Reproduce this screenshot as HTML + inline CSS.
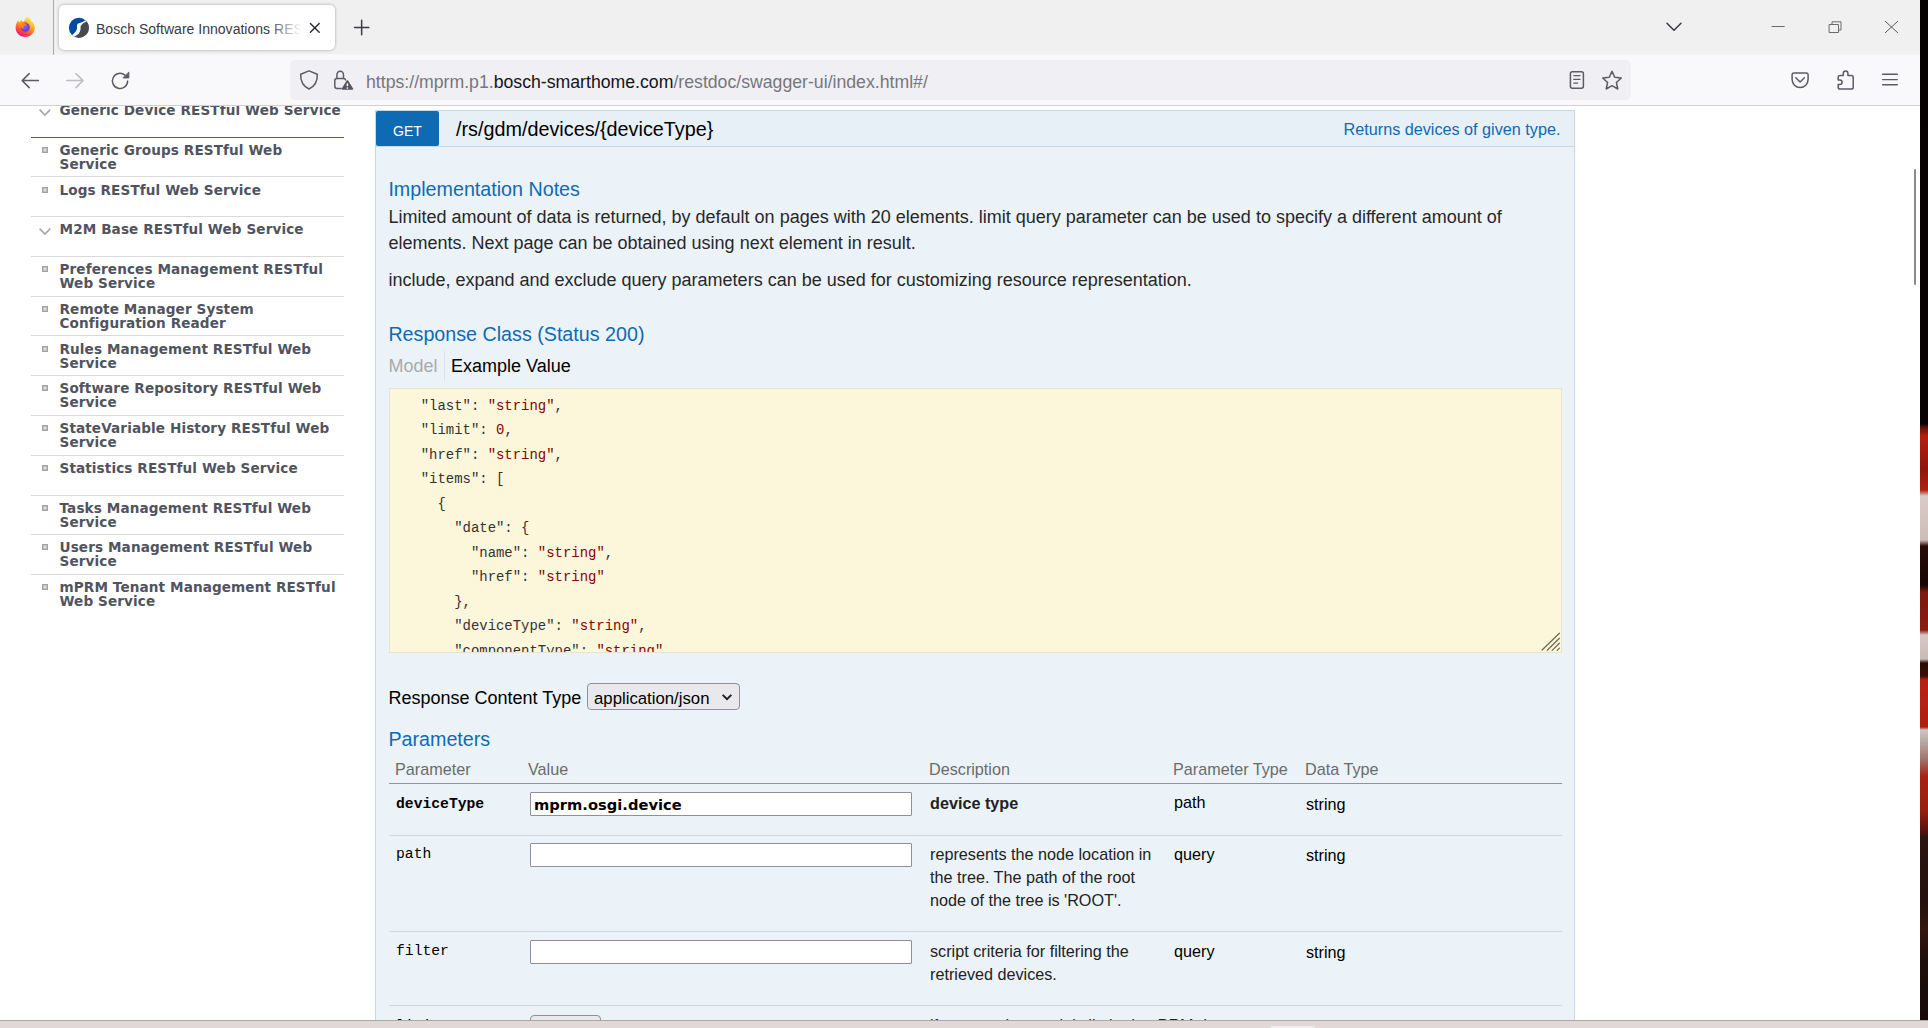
<!DOCTYPE html>
<html lang="en">
<head>
<meta charset="utf-8">
<title>Bosch Software Innovations REST API</title>
<style>
*{box-sizing:border-box;}
html,body{margin:0;padding:0;}
body{width:1928px;height:1028px;overflow:hidden;position:relative;background:#fff;font-family:"Liberation Sans",sans-serif;color:#000;}
.abs{position:absolute;}
#browser{position:absolute;left:0;top:0;width:1920px;height:1020px;overflow:hidden;background:#fff;}
/* ---------- chrome ---------- */
#tabbar{position:absolute;left:0;top:0;width:1920px;height:55px;background:linear-gradient(to bottom,#f0f0f1 0,#f0f0f1 54px,#f5f5f7 54px,#f5f5f7 55px);}
#tabsep{position:absolute;left:53px;top:0;width:1px;height:55px;background:#a9a9ab;}
#tab{position:absolute;left:59px;top:5px;width:276px;height:45px;background:#fff;border-radius:5px;box-shadow:0 0 3px rgba(0,0,0,.35);}
#tabtitle{position:absolute;left:37px;top:0;height:45px;line-height:48px;font-size:14.05px;color:#3b3a44;white-space:nowrap;width:208px;overflow:hidden;}
#tabfade{position:absolute;left:209px;top:4px;width:38px;height:36px;background:linear-gradient(to right,rgba(255,255,255,0),#fff 88%);}
#navbar{position:absolute;left:0;top:55px;width:1920px;height:51px;background:#f9f9fb;border-bottom:1px solid #cfcfd4;}
#urlbar{position:absolute;left:289.5px;top:60px;width:1341.5px;height:40px;background:#f0f0f4;border-radius:5px;}
#urltext{position:absolute;left:366px;top:61px;height:40px;line-height:42px;font-size:17.68px;letter-spacing:0;color:#77767e;white-space:nowrap;}
#urltext b{font-weight:normal;color:#15141a;}
svg{position:absolute;overflow:visible;}
/* ---------- page ---------- */
#page{position:absolute;left:0;top:106px;width:1920px;height:914px;overflow:hidden;background:#fff;}
#side{position:absolute;left:31px;top:-9px;width:313px;font-family:"DejaVu Sans","Liberation Sans",sans-serif;font-weight:bold;font-size:13.6px;letter-spacing:0.1px;line-height:14px;color:#50545f;}
.si{position:relative;height:40px;border-bottom:1px solid #d9d9d9;padding:5px 0 0 28.5px;}
.si.first{height:41px;padding-top:6px;border-bottom:1.5px solid #1c6a8c;}
.si.last{border-bottom:none;}
.bul{position:absolute;left:11px;top:9px;width:6px;height:6px;border:1px solid #a3a3a3;background:#dcdcdc;box-shadow:inset 0 0 0 0.5px #a9a9a9;}
#panel{position:absolute;left:375px;top:4px;width:1200px;height:940px;background:#ebf3f9;border:1px solid #c3d9ec;}
#heading{position:absolute;left:0;top:0;width:1198px;height:36px;background:#e7f0f7;border-bottom:1px solid #c3d9ec;}
#get{position:absolute;left:0px;top:0px;width:63px;height:35px;background:#0f6ab4;border-radius:2px;color:#fff;font-size:14px;text-align:center;line-height:41px;}
#pathtxt{position:absolute;left:80px;top:0;line-height:37px;font-size:19.8px;color:#000;white-space:nowrap;}
#rettxt{position:absolute;right:13.6px;top:0;line-height:36px;font-size:16.2px;color:#0f6ab4;white-space:nowrap;}
h4{position:absolute;margin:0;font-weight:normal;font-size:19.7px;color:#0f6ab4;white-space:nowrap;line-height:24px;}
.p{position:absolute;left:12.4px;font-size:18px;line-height:26px;color:#282828;white-space:nowrap;}
#snip{position:absolute;left:13px;top:277px;width:1173px;height:265px;background:#fcf6db;border:1px solid #e8e3cb;overflow:hidden;}
#snip pre{margin:0;position:absolute;left:14px;top:4.5px;font-family:"Liberation Mono","DejaVu Sans Mono",monospace;font-size:13.95px;line-height:24.5px;color:#333;}
#snip pre i{font-style:normal;color:#880000;}
.th{position:absolute;top:648px;font-size:16.2px;line-height:20px;color:#6b6b6b;white-space:nowrap;}
.hr{position:absolute;left:13px;width:1173px;height:1px;background:#cfd6dc;}
.pn{position:absolute;left:20px;font-family:"Liberation Mono","DejaVu Sans Mono",monospace;font-size:14.7px;line-height:20px;color:#000;white-space:nowrap;}
.inp{position:absolute;left:154px;width:382px;height:24px;background:#fff;border:1px solid #8f8f9d;border-radius:1px;}
.td{position:absolute;font-size:16.2px;line-height:23px;color:#222;white-space:nowrap;}
</style>
</head>
<body>
<div id="browser">
  <div id="tabbar"></div>
  <div id="tabsep"></div>
  <div id="tab">
    <div id="tabtitle">Bosch Software Innovations REST API</div>
    <div id="tabfade"></div>
  </div>
  <div id="navbar"></div>
  <div id="urlbar"></div>
  <div id="urltext">https://mprm.p1.<b>bosch-smarthome.com</b>/restdoc/swagger-ui/index.html#/</div>


  <svg id="chromeicons" width="1920" height="106" viewBox="0 0 1920 106" style="left:0;top:0;" fill="none" stroke="#5b5b66" stroke-width="1.5" stroke-linecap="round" stroke-linejoin="round">
    <defs>
      <radialGradient id="ffg" cx="0.55" cy="0.2" r="0.95">
        <stop offset="0" stop-color="#fff36b"/><stop offset="0.35" stop-color="#ffbd2e"/><stop offset="0.7" stop-color="#ff6a2a"/><stop offset="1" stop-color="#e31587"/>
      </radialGradient>
      <linearGradient id="ffg2" x1="0.8" y1="0.05" x2="0.35" y2="1">
        <stop offset="0" stop-color="#fff14f"/><stop offset="0.3" stop-color="#ffbd2a"/><stop offset="0.55" stop-color="#ff8a1a"/><stop offset="0.8" stop-color="#ff3b43"/><stop offset="1" stop-color="#f0158a"/>
      </linearGradient>
      <clipPath id="favclip"><circle cx="78.9" cy="27.7" r="10"/></clipPath>
      <radialGradient id="ffp" cx="0.5" cy="0.5" r="0.6">
        <stop offset="0" stop-color="#9059ff"/><stop offset="1" stop-color="#5b2ec9"/>
      </radialGradient>
    </defs>
    <!-- firefox logo -->
    <g stroke="none">
      <path d="M27.2 16.6 C29.5 18 30.6 19.6 31 21 C33.4 22.6 34.9 25.2 34.8 28 C34.7 33 30.4 36.9 25.2 36.9 C19.9 36.9 15.6 32.8 15.6 27.7 C15.6 24.6 16.8 22 18.4 20.3 C18.5 21.3 18.9 22 19.4 22.5 C19.8 21.3 20.6 20.4 21.6 19.8 C21.7 20.8 22.2 21.7 23.2 22.1 C24.1 20.6 25.4 19.8 25.6 18.6 C26.3 18.3 27 17.6 27.2 16.6 Z" fill="url(#ffg2)"/>
      <circle cx="25.4" cy="27.4" r="4.3" fill="url(#ffp)"/>
      <path d="M22.6 21.8 C24.4 21.3 27 22 28.4 23.6 C27.2 23.2 25.8 23.4 25 24 C26.3 24.2 27.3 25 27.6 26 C26.4 25.2 25 25.3 24.2 26 C23.2 26.9 23.2 28.3 24 29.2 C22.3 29 21 27.6 21 26 C20.9 24.3 21.6 22.6 22.6 21.8 Z" fill="#ff8a16"/>
      <path d="M24.4 22.3 C25.8 22.1 27.4 22.7 28.4 23.6 C27.2 23.2 25.9 23.4 25 24 C24.6 23.5 24.4 22.9 24.4 22.3 Z" fill="#c13ae0" opacity="0.85"/>
    </g>
    <!-- tab favicon -->
    <g stroke="none" clip-path="url(#favclip)">
      <rect x="68" y="17" width="22" height="22" fill="#004a9f"/>
      <path d="M87.5 19.5 L82.7 23.6 L80.6 26.2 L80.6 28.7 L80.1 31.3 L78.5 33.9 L73.5 37.5 L90 40 L92 18 Z" fill="#4a4a4a"/>
      <path d="M86.5 19.8 L82.5 22 L77.6 23.8 L77 25.2 L77 28.7 L75.9 31.3 L73.4 33.9 L70.5 36.2 L73.6 37.2 L78.5 33.9 L80.1 31.3 L80.6 28.7 L80.6 26.2 L82.7 23.6 L88 20.6 Z" fill="#fff"/>
    </g>
    <!-- tab close -->
    <path d="M310.4 23.4 L319.2 32.2 M319.2 23.4 L310.4 32.2" stroke="#2b2a33" stroke-width="1.4"/>
    <!-- new tab -->
    <path d="M354.5 27.5 H368.8 M361.65 20.3 V34.7" stroke="#3a3944" stroke-width="1.5"/>
    <!-- list all tabs -->
    <path d="M1667 23.2 L1674 30.2 L1681 23.2" stroke="#3a3944" stroke-width="1.5"/>
    <!-- window controls -->
    <path d="M1772 26.5 H1784.3" stroke="#6a6a6a" stroke-width="1"/>
    <path d="M1829.5 24.5 H1838.5 V32.5 H1829.5 Z M1832 24.5 V21.8 H1841 V30 H1838.5" stroke="#6a6a6a" stroke-width="1" stroke-linejoin="miter"/>
    <path d="M1885.3 21.3 L1897.7 32.7 M1897.7 21.3 L1885.3 32.7" stroke="#5a5a5a" stroke-width="1"/>
    <!-- back -->
    <path d="M22.2 80.6 H38.4 M29.2 73.6 L22.2 80.6 L29.2 87.6"/>
    <!-- forward (disabled) -->
    <path d="M66.8 80.6 H83 M76 73.6 L83 80.6 L76 87.6" stroke="#bdbdc2"/>
    <!-- reload -->
    <path d="M127.6 80.9 A7.6 7.6 0 1 1 124.9 75.1" />
    <path d="M128.9 72.3 V78 H123.2 Z" fill="#5b5b66" stroke-width="0.8"/>
    <!-- shield -->
    <path d="M309 70.9 L317.3 74.3 C317.6 80.5 315.3 86 309 89 C302.7 86 300.4 80.5 300.7 74.3 Z"/>
    <!-- lock + warning -->
    <path d="M341 88.4 H337 Q334.8 88.4 334.8 86.2 V80.6 Q334.8 78.6 337 78.6 H343.4 Q345.4 78.6 345.6 80"/>
    <path d="M336.9 78.4 V75 A3.3 3.8 0 0 1 343.5 75 V78.4"/>
    <path d="M347.4 81 L352.4 89 H342.4 Z" fill="#55555f" stroke="#55555f" stroke-width="1.6"/>
    <path d="M347.4 83.3 V86.2" stroke="#fff" stroke-width="1.5" stroke-linecap="butt"/>
    <circle cx="347.4" cy="88" r="0.85" fill="#fff" stroke="none"/>
    <!-- reader view -->
    <rect x="1570.4" y="71.8" width="13" height="16.4" rx="2"/>
    <path d="M1573.8 75.6 H1580 M1573.8 79.4 H1580 M1573.8 83.1 H1577.6" stroke-width="1.3"/>
    <!-- star -->
    <path d="M1612 71.2 L1614.7 77.3 L1621.3 78 L1616.4 82.5 L1617.8 89 L1612 85.7 L1606.2 89 L1607.6 82.5 L1602.7 78 L1609.3 77.3 Z"/>
    <!-- pocket -->
    <path d="M1794 73.1 H1806.2 Q1808.1 73.1 1808.1 75 V79.5 A8 8 0 0 1 1792.1 79.5 V75 Q1792.1 73.1 1794 73.1 Z"/>
    <path d="M1795.8 77.8 L1800.1 82 L1804.4 77.8"/>
    <!-- extensions -->
    <path d="M1843.3 75.4 V73.2 A2.3 2.3 0 0 1 1847.9 73.2 V75.4 H1851.3 Q1853.2 75.4 1853.2 77.3 V87.2 Q1853.2 89.1 1851.3 89.1 H1840.1 Q1838.2 89.1 1838.2 87.2 V84.6 H1839.8 A2.3 2.3 0 0 0 1839.8 80 H1838.2 V77.3 Q1838.2 75.4 1840.1 75.4 Z"/>
    <!-- menu -->
    <path d="M1882.6 74.3 H1897.3 M1882.6 79.6 H1897.3 M1882.6 84.8 H1897.3" stroke-width="1.4"/>
  </svg>

  <div id="page">
    <div id="side">
      <div class="si first"><svg width="12" height="7" viewBox="0 0 12 7" style="left:8px;top:12px;" fill="none" stroke="#a8a8a8" stroke-width="1.7"><path d="M0.6 0.7 L5.9 6 L11.2 0.7"/></svg>Generic Device RESTful Web Service</div>
      <div class="si" style="height:39px"><span class="bul"></span>Generic Groups RESTful Web<br>Service</div>
      <div class="si" style="height:40px;padding-top:6px"><span class="bul" style="top:10px"></span>Logs RESTful Web Service</div>
      <div class="si" style="height:40px"><svg width="12" height="7" viewBox="0 0 12 7" style="left:8px;top:11px;" fill="none" stroke="#a8a8a8" stroke-width="1.7"><path d="M0.6 0.7 L5.9 6 L11.2 0.7"/></svg>M2M Base RESTful Web Service</div>
      <div class="si" style="height:40px"><span class="bul"></span>Preferences Management RESTful<br>Web Service</div>
      <div class="si" style="height:39px"><span class="bul"></span>Remote Manager System<br>Configuration Reader</div>
      <div class="si" style="height:40px;padding-top:6px"><span class="bul" style="top:10px"></span>Rules Management RESTful Web<br>Service</div>
      <div class="si" style="height:40px"><span class="bul"></span>Software Repository RESTful Web<br>Service</div>
      <div class="si" style="height:40px"><span class="bul"></span>StateVariable History RESTful Web<br>Service</div>
      <div class="si" style="height:40px"><span class="bul"></span>Statistics RESTful Web Service</div>
      <div class="si" style="height:39px"><span class="bul"></span>Tasks Management RESTful Web<br>Service</div>
      <div class="si" style="height:40px"><span class="bul"></span>Users Management RESTful Web<br>Service</div>
      <div class="si last" style="height:40px"><span class="bul"></span>mPRM Tenant Management RESTful<br>Web Service</div>
    </div>

    <div id="panel">
      <div id="heading">
        <div id="get">GET</div>
        <div id="pathtxt">/rs/gdm/devices/{deviceType}</div>
        <div id="rettxt">Returns devices of given type.</div>
      </div>
      <h4 style="left:12.4px;top:66px;">Implementation Notes</h4>
      <div class="p" style="top:93px;">Limited amount of data is returned, by default on pages with 20 elements. limit query parameter can be used to specify a different amount of<br>elements. Next page can be obtained using next element in result.</div>
      <div class="p" style="top:156px;">include, expand and exclude query parameters can be used for customizing resource representation.</div>
      <h4 style="left:12.4px;top:211px;">Response Class (Status 200)</h4>
      <div class="p" style="top:242px;color:#aaa;">Model</div>
      <div class="abs" style="left:68px;top:240px;width:1px;height:30px;background:#dde3e8;"></div>
      <div class="p" style="top:242px;left:75px;color:#000;">Example Value</div>
      <div id="snip"><pre>  "last": <i>"string"</i>,
  "limit": <i>0</i>,
  "href": <i>"string"</i>,
  "items": [
    {
      "date": {
        "name": <i>"string"</i>,
        "href": <i>"string"</i>
      },
      "deviceType": <i>"string"</i>,
      "componentType": <i>"string"</i></pre><svg width="20" height="20" viewBox="0 0 20 20" style="left:1151px;top:243px;" stroke="#6e6a55" stroke-width="1.25" stroke-linecap="round" fill="none"><path d="M1.1 18 L18.4 1.2 M6.2 18.2 L18.4 6.3 M11.1 18.4 L18.4 11.2 M16.1 18.4 L18.4 16.1"/></svg></div>
      <div class="p" style="top:574px;color:#000;">Response Content Type</div>
      <div class="abs" style="left:211px;top:571.5px;width:153px;height:27px;background:#e9e9ed;border:1px solid #8f8f9d;border-radius:4px;font-size:16.75px;line-height:29px;padding-left:6px;color:#000;">application/json<svg width="10" height="7" viewBox="0 0 10 7" style="left:133.5px;top:10px;" fill="none" stroke="#1a1a1a" stroke-width="1.9"><path d="M0.7 0.8 L5 5.2 L9.3 0.8"/></svg></div>
      <h4 style="left:12.4px;top:616px;">Parameters</h4>
      <div class="th" style="left:19px;">Parameter</div>
      <div class="th" style="left:152px;">Value</div>
      <div class="th" style="left:553px;">Description</div>
      <div class="th" style="left:797px;">Parameter Type</div>
      <div class="th" style="left:929px;">Data Type</div>
      <div class="hr" style="top:672px;background:#8f949b;"></div>

      <div class="pn" style="top:683px;font-weight:bold;">deviceType</div>
      <div class="inp" style="top:681px;font-family:'DejaVu Sans','Liberation Sans',sans-serif;font-weight:bold;font-size:14.7px;line-height:24px;padding-left:3px;">mprm.osgi.device</div>
      <div class="td" style="left:554px;top:681px;font-weight:bold;">device type</div>
      <div class="td" style="left:798px;top:680px;color:#000;">path</div>
      <div class="td" style="left:930px;top:682px;color:#000;">string</div>
      <div class="hr" style="top:724px;"></div>

      <div class="pn" style="top:733px;">path</div>
      <div class="inp" style="top:732px;"></div>
      <div class="td" style="left:554px;top:732px;">represents the node location in<br>the tree. The path of the root<br>node of the tree is 'ROOT'.</div>
      <div class="td" style="left:798px;top:732px;color:#000;">query</div>
      <div class="td" style="left:930px;top:733px;color:#000;">string</div>
      <div class="hr" style="top:820px;"></div>

      <div class="pn" style="top:830px;">filter</div>
      <div class="inp" style="top:829px;"></div>
      <div class="td" style="left:554px;top:829px;">script criteria for filtering the<br>retrieved devices.</div>
      <div class="td" style="left:798px;top:829px;color:#000;">query</div>
      <div class="td" style="left:930px;top:830px;color:#000;">string</div>
      <div class="hr" style="top:894px;"></div>

      <div class="pn" style="top:904.5px;">limit</div>
      <div class="abs" style="left:154px;top:903.5px;width:71px;height:26px;background:#e9e9ed;border:1px solid #8f8f9d;border-radius:4px;"></div>
      <div class="td" style="left:554px;top:903px;">if present the result is limited to PRM data</div>
    </div>
    <!-- page scrollbar thumb -->
    <div class="abs" style="left:1914px;top:63px;width:2px;height:116px;background:#8b8b8b;border-radius:1px;"></div>
  </div>
</div>
<!-- desktop visible to the right / bottom of the window -->
<div id="deskR" class="abs" style="left:1920px;top:0;width:8px;height:1020px;background:linear-gradient(to bottom,#070202 0,#080202 424px,#5a0e08 427px,#b4200f 436px,#8f160b 470px,#b02010 490px,#d9cbc7 496px,#cdbdb9 540px,#2a0a06 546px,#160504 585px,#7a1a10 592px,#8c1c10 630px,#d6c8c4 635px,#cbbbb7 659px,#2a0c08 663px,#3a0e08 676px,#b82212 680px,#b01e10 727px,#cfc6c2 730px,#b8a8a2 742px,#a07068 760px,#a82212 776px,#98200f 810px,#5a140c 830px,#2c1410 838px,#24100d 900px,#34160f 930px,#1e0e0b 960px,#160a08 1020px);"></div>
<div id="deskB" class="abs" style="left:0;top:1020px;width:1928px;height:8px;background:#e2d8d7;border-top:1px solid #ada8a8;"><div class="abs" style="left:1270px;top:4.5px;width:45px;height:6px;background:#f1eded;border-radius:3px 3px 0 0;"></div></div>
</body>
</html>
